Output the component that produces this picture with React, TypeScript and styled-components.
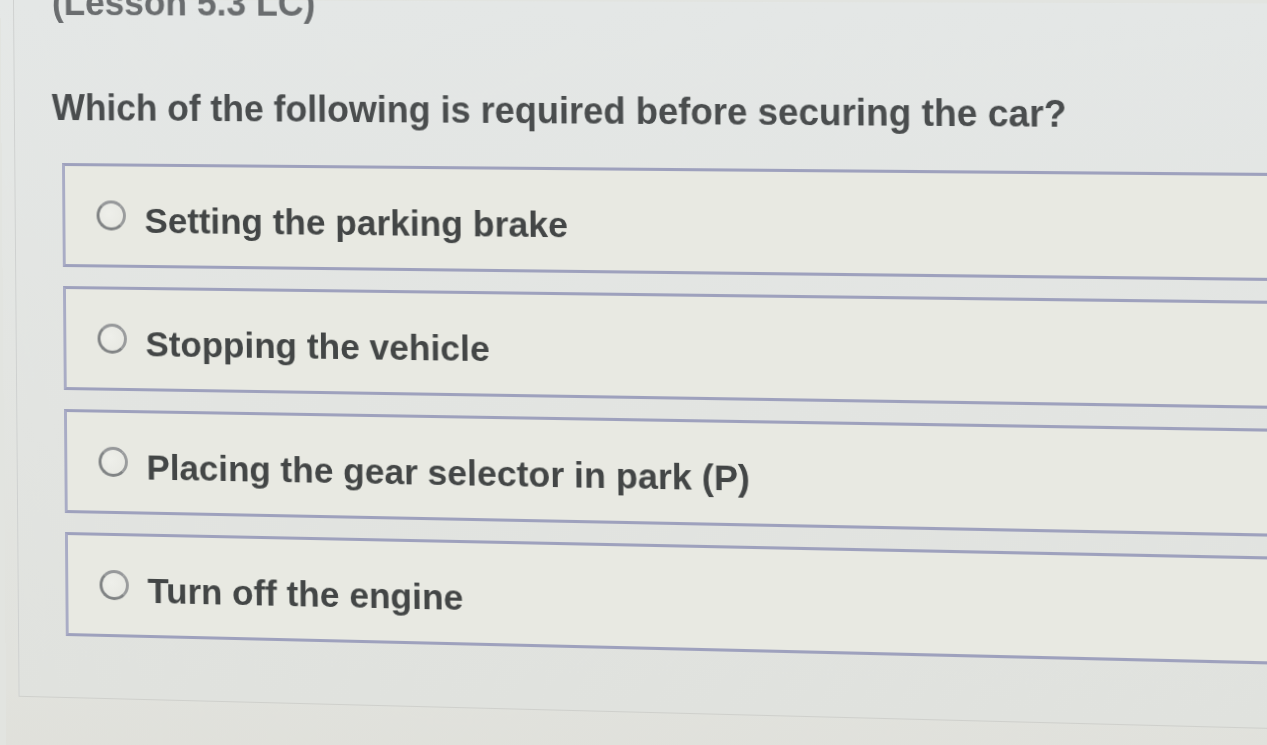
import React from "react";
import styled, { createGlobalStyle } from "styled-components";

const GlobalStyle = createGlobalStyle`
  html, body {
    margin: 0;
    padding: 0;
    overflow: hidden;
    background: #e2e4e0;
    font-family: "Liberation Sans", Arial, sans-serif;
  }
`;

/* The quiz sheet sits at a slight perspective tilt on the display. */
const Sheet = styled.div`
  width: 1300px;
  height: 800px;
  display: flex;
  flex-direction: column;
  background: linear-gradient(
    180deg,
    #e5e8e7 0%,
    #e3e5e2 45%,
    #e1e2dd 85%,
    #dfdfd9 100%
  );
  transform-origin: 0 0;
  transform: matrix3d(
    0.973022, 0.00278, 0, -0.0000319,
    0.008, 1, 0, 0,
    0, 0, 1, 0,
    0.37, -0.1724, 0, 1.001978
  );
`;

const Panel = styled.section`
  margin-left: 13px;
  padding: 0 0 61px 38px;
  display: flex;
  flex-direction: column;
  border-left: 1px solid #cfd1d0;
  border-bottom: 1px solid #cfd0cc;
  background: linear-gradient(180deg, #e4e7e6 0%, #e2e4e1 60%, #e0e2de 100%);
`;

const Lesson = styled.div`
  margin: -17px 0 0 1px;
  font-size: 36px;
  font-weight: 700;
  line-height: 40px;
  color: #6a6d6f;
  white-space: nowrap;
`;

const Question = styled.h1`
  margin: 65px 0 0;
  font-size: 36px;
  font-weight: 700;
  line-height: 40px;
  color: #4a4d4e;
  white-space: nowrap;
`;

const OptionList = styled.div`
  margin: 35px 0 0 10px;
  display: flex;
  flex-direction: column;
  gap: 19px;
`;

const OptionBox = styled.label`
  height: 104px;
  box-sizing: border-box;
  display: flex;
  align-items: center;
  padding-left: 32px;
  border: 3px solid #9ea1bd;
  border-left-color: #a9acc5;
  border-right: none;
  background: #e8e9e2;
  cursor: pointer;
`;

const Radio = styled.span`
  width: 30px;
  height: 30px;
  box-sizing: border-box;
  flex-shrink: 0;
  border-radius: 50%;
  border: 3px solid #808384;
  border-top-color: #96989a;
  border-right-color: #9a9c9d;
  background: radial-gradient(circle at 40% 40%, #eeefea 0%, #e6e7e1 100%);
`;

const OptionText = styled.span`
  margin-left: 19px;
  padding-top: 10px;
  font-size: 35.5px;
  font-weight: 700;
  line-height: 40px;
  color: #434646;
  white-space: nowrap;
`;

const options = [
  "Setting the parking brake",
  "Stopping the vehicle",
  "Placing the gear selector in park (P)",
  "Turn off the engine",
];

export default function App() {
  return (
    <>
      <GlobalStyle />
      <Sheet>
        <Panel>
          <Lesson>(Lesson 5.3 LC)</Lesson>
          <Question>Which of the following is required before securing the car?</Question>
          <OptionList>
            {options.map((text) => (
              <OptionBox key={text}>
                <Radio />
                <OptionText>{text}</OptionText>
              </OptionBox>
            ))}
          </OptionList>
        </Panel>
      </Sheet>
    </>
  );
}
